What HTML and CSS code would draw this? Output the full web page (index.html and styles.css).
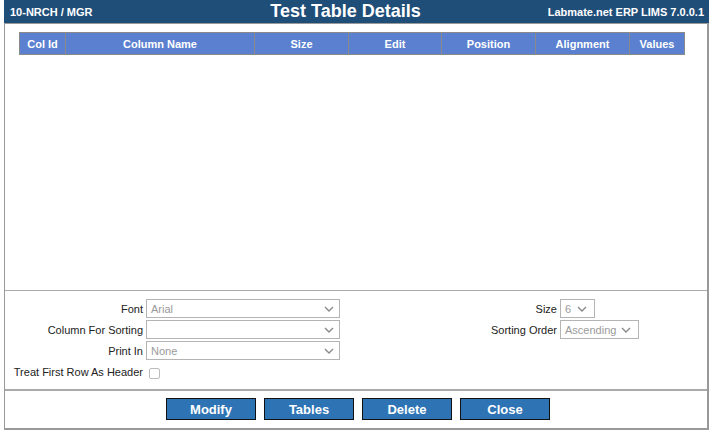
FILE: index.html
```html
<!DOCTYPE html>
<html>
<head>
<meta charset="utf-8">
<link rel="stylesheet" href="styles.css">
</head>
<body>
<div class="page">
  <div class="topbar">
    <div class="tb-left">10-NRCH / MGR</div>
    <div class="tb-title">Test Table Details</div>
    <div class="tb-right">Labmate.net ERP LIMS 7.0.0.1</div>
  </div>
  <div class="grid-area">
    <div class="thead">
      <div class="th c1">Col Id</div>
      <div class="th c2">Column Name</div>
      <div class="th c3">Size</div>
      <div class="th c4">Edit</div>
      <div class="th c5">Position</div>
      <div class="th c6">Alignment</div>
      <div class="th c7">Values</div>
    </div>
  </div>
  <div class="form-area">
    <div class="fgrid left">
      <div class="lbl">Font</div>
      <div class="sel w194"><span class="val">Arial</span><svg class="chev" width="10" height="6" viewBox="0 0 10 6"><path d="M1 1 L5 5 L9 1" fill="none" stroke="#8a8a8a" stroke-width="1.4"/></svg></div>
      <div class="lbl">Column For Sorting</div>
      <div class="sel w194"><span class="val"></span><svg class="chev" width="10" height="6" viewBox="0 0 10 6"><path d="M1 1 L5 5 L9 1" fill="none" stroke="#8a8a8a" stroke-width="1.4"/></svg></div>
      <div class="lbl">Print In</div>
      <div class="sel w194"><span class="val">None</span><svg class="chev" width="10" height="6" viewBox="0 0 10 6"><path d="M1 1 L5 5 L9 1" fill="none" stroke="#8a8a8a" stroke-width="1.4"/></svg></div>
      <div class="lbl">Treat First Row As Header</div>
      <div class="cbwrap"><span class="cb"></span></div>
    </div>
    <div class="fgrid right">
      <div class="lbl">Size</div>
      <div class="sel w35"><span class="val">6</span><svg class="chev" width="10" height="6" viewBox="0 0 10 6"><path d="M1 1 L5 5 L9 1" fill="none" stroke="#8a8a8a" stroke-width="1.4"/></svg></div>
      <div class="lbl">Sorting Order</div>
      <div class="sel w79"><span class="val">Ascending</span><svg class="chev" width="10" height="6" viewBox="0 0 10 6"><path d="M1 1 L5 5 L9 1" fill="none" stroke="#8a8a8a" stroke-width="1.4"/></svg></div>
    </div>
  </div>
  <div class="btn-area">
    <button class="btn">Modify</button>
    <button class="btn">Tables</button>
    <button class="btn">Delete</button>
    <button class="btn">Close</button>
  </div>
</div>
</body>
</html>
```
FILE: styles.css
```css
* { box-sizing: border-box; }
html, body { margin: 0; padding: 0; background: #fff; }
body { font-family: "Liberation Sans", Arial, sans-serif; }

.page {
  margin-left: 4px;
  width: 705px;
  height: 430px;
  border-left: 1px solid #999;
  border-right: 2px solid #999;
  border-bottom: 2px solid #999;
  display: flex;
  flex-direction: column;
}

.topbar {
  height: 24px;
  background: #1f4e79;
  border-bottom: 1px solid #9a9a9a;
  display: flex;
  align-items: center;
  color: #fff;
  font-weight: bold;
  margin-left: -1px;
  margin-right: -2px;
}
.tb-left { width: 200px; font-size: 11px; padding-left: 6px; }
.tb-title { flex: 1; text-align: center; font-size: 18px; }
.tb-right { width: 222px; font-size: 11px; text-align: right; padding-right: 5px; }

.grid-area {
  height: 266px;
  padding: 8px 0 0 14px;
}
.thead {
  display: flex;
  width: 666px;
  height: 23px;
  background: #5b80d0;
  border: 1px solid #8a8a8a;
}
.th {
  color: #fff;
  font-size: 11px;
  font-weight: bold;
  display: flex;
  align-items: center;
  justify-content: center;
  border-right: 1px solid #8a8a8a;
}
.th:last-child { border-right: none; }
.c1 { width: 46px; }
.c2 { width: 189px; }
.c3 { width: 94px; }
.c4 { width: 93px; }
.c5 { width: 94px; }
.c6 { width: 94px; }
.c7 { flex: 1; }

.form-area {
  border-top: 1px solid #aaa;
  height: 99px;
  padding-top: 8px;
  display: flex;
  align-items: flex-start;
}
.fgrid {
  display: grid;
  column-gap: 3px;
  row-gap: 2px;
  grid-auto-rows: 19px;
  align-items: center;
}
.left { grid-template-columns: 138px 194px; }
.right { grid-template-columns: 217px auto; }
.lbl {
  font-size: 11px;
  color: #222;
  text-align: right;
  white-space: nowrap;
  padding-top: 1px;
}
.sel {
  height: 19px;
  border: 1px solid #b4b4b4;
  background: #fff;
  display: flex;
  align-items: center;
  padding: 0 5px 0 4px;
  font-size: 11px;
  color: #9a9a9a;
}
.sel .val { flex: 1; white-space: nowrap; }
.chev { flex: none; }
.w194 { width: 194px; }
.w35 { width: 35px; padding-right: 7px; }
.w79 { width: 79px; padding-right: 7px; }
.cbwrap { display: flex; align-items: center; padding-left: 3px; height: 19px; padding-top: 4px; }
.cb {
  width: 11px;
  height: 11px;
  border: 1px solid #bdbdbd;
  border-radius: 2px;
  background: #fff;
}

.btn-area {
  border-top: 2px solid #aaa;
  flex: 1;
  display: flex;
  justify-content: center;
  gap: 8px;
  padding: 7px 0 0 4px;
}
.btn {
  width: 90px;
  height: 22px;
  background: #2e74b5;
  border: 1px solid #111;
  color: #fff;
  font-family: "Liberation Sans", Arial, sans-serif;
  font-weight: bold;
  font-size: 13px;
  padding: 0;
  margin: 0;
}
```
